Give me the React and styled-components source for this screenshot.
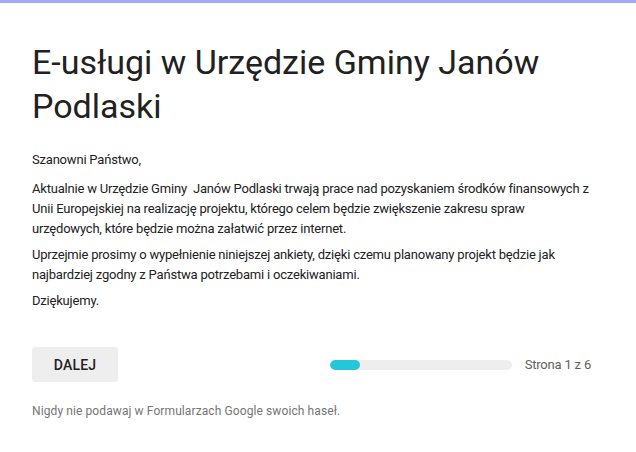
import React from 'react'
import styled, { createGlobalStyle } from 'styled-components'

const GlobalStyle = createGlobalStyle`
  body {
    margin: 0;
    background: #fff;
    font-family: Roboto, "Liberation Sans", Arial, sans-serif;
  }
`

const Page = styled.div`
  width: 636px;
  height: 452px;
  border-top: 3px solid #9fa8fa;
  box-sizing: border-box;
  background: #fff;
`

const Content = styled.div`
  padding: 37px 32px 0 32px;
`

const Title = styled.h1`
  margin: 0;
  font-size: 34px;
  font-weight: 400;
  line-height: 44px;
  color: #212121;
`

const Description = styled.div`
  margin-top: 22px;
  max-width: 562px;
  font-size: 13px;
  line-height: 20px;
  letter-spacing: -0.2px;
  color: #212121;

  p {
    margin: 0 0 6px 0;
  }

  p:first-child {
    margin-bottom: 9px;
  }
`

const Footer = styled.div`
  margin-top: 36px;
  display: flex;
  align-items: center;
  justify-content: space-between;
`

const NextButton = styled.button`
  width: 86px;
  height: 35px;
  border: none;
  border-radius: 3px;
  background: #eeeeee;
  color: #212121;
  font-family: inherit;
  font-size: 14px;
  font-weight: 500;
  letter-spacing: 0.2px;
  padding: 0;
`

const Progress = styled.div`
  display: flex;
  align-items: center;
  gap: 13px;
  margin-right: 13px;
`

const Track = styled.div`
  width: 182px;
  height: 10px;
  border-radius: 5px;
  background: #eeeeee;
  overflow: hidden;
`

const Fill = styled.div`
  height: 100%;
  border-radius: 5px;
  background: #26c6da;
`

const PageLabel = styled.span`
  font-size: 13px;
  letter-spacing: -0.2px;
  color: #616161;
`

const Notice = styled.p`
  margin: 22px 0 0 0;
  font-size: 12px;
  line-height: 14px;
  letter-spacing: 0.1px;
  color: #757575;
`

export default function App() {
  const page = 1
  const total = 6
  return (
    <>
      <GlobalStyle />
      <Page>
        <Content>
          <Title>E-usługi w Urzędzie Gminy Janów Podlaski</Title>
          <Description>
            <p>Szanowni Państwo,</p>
            <p>
              Aktualnie w Urzędzie Gminy&nbsp; Janów Podlaski trwają prace nad pozyskaniem środków finansowych z Unii Europejskiej na realizację projektu, którego celem będzie zwiększenie zakresu spraw urzędowych, które będzie można załatwić przez internet.
            </p>
            <p>
              Uprzejmie prosimy o wypełnienie niniejszej ankiety, dzięki czemu planowany projekt będzie jak najbardziej zgodny z Państwa potrzebami i oczekiwaniami.
            </p>
            <p>Dziękujemy.</p>
          </Description>
          <Footer>
            <NextButton>DALEJ</NextButton>
            <Progress>
              <Track>
                <Fill style={{ width: `${(page / total) * 100}%` }} />
              </Track>
              <PageLabel>Strona {page} z {total}</PageLabel>
            </Progress>
          </Footer>
          <Notice>Nigdy nie podawaj w Formularzach Google swoich haseł.</Notice>
        </Content>
      </Page>
    </>
  )
}
